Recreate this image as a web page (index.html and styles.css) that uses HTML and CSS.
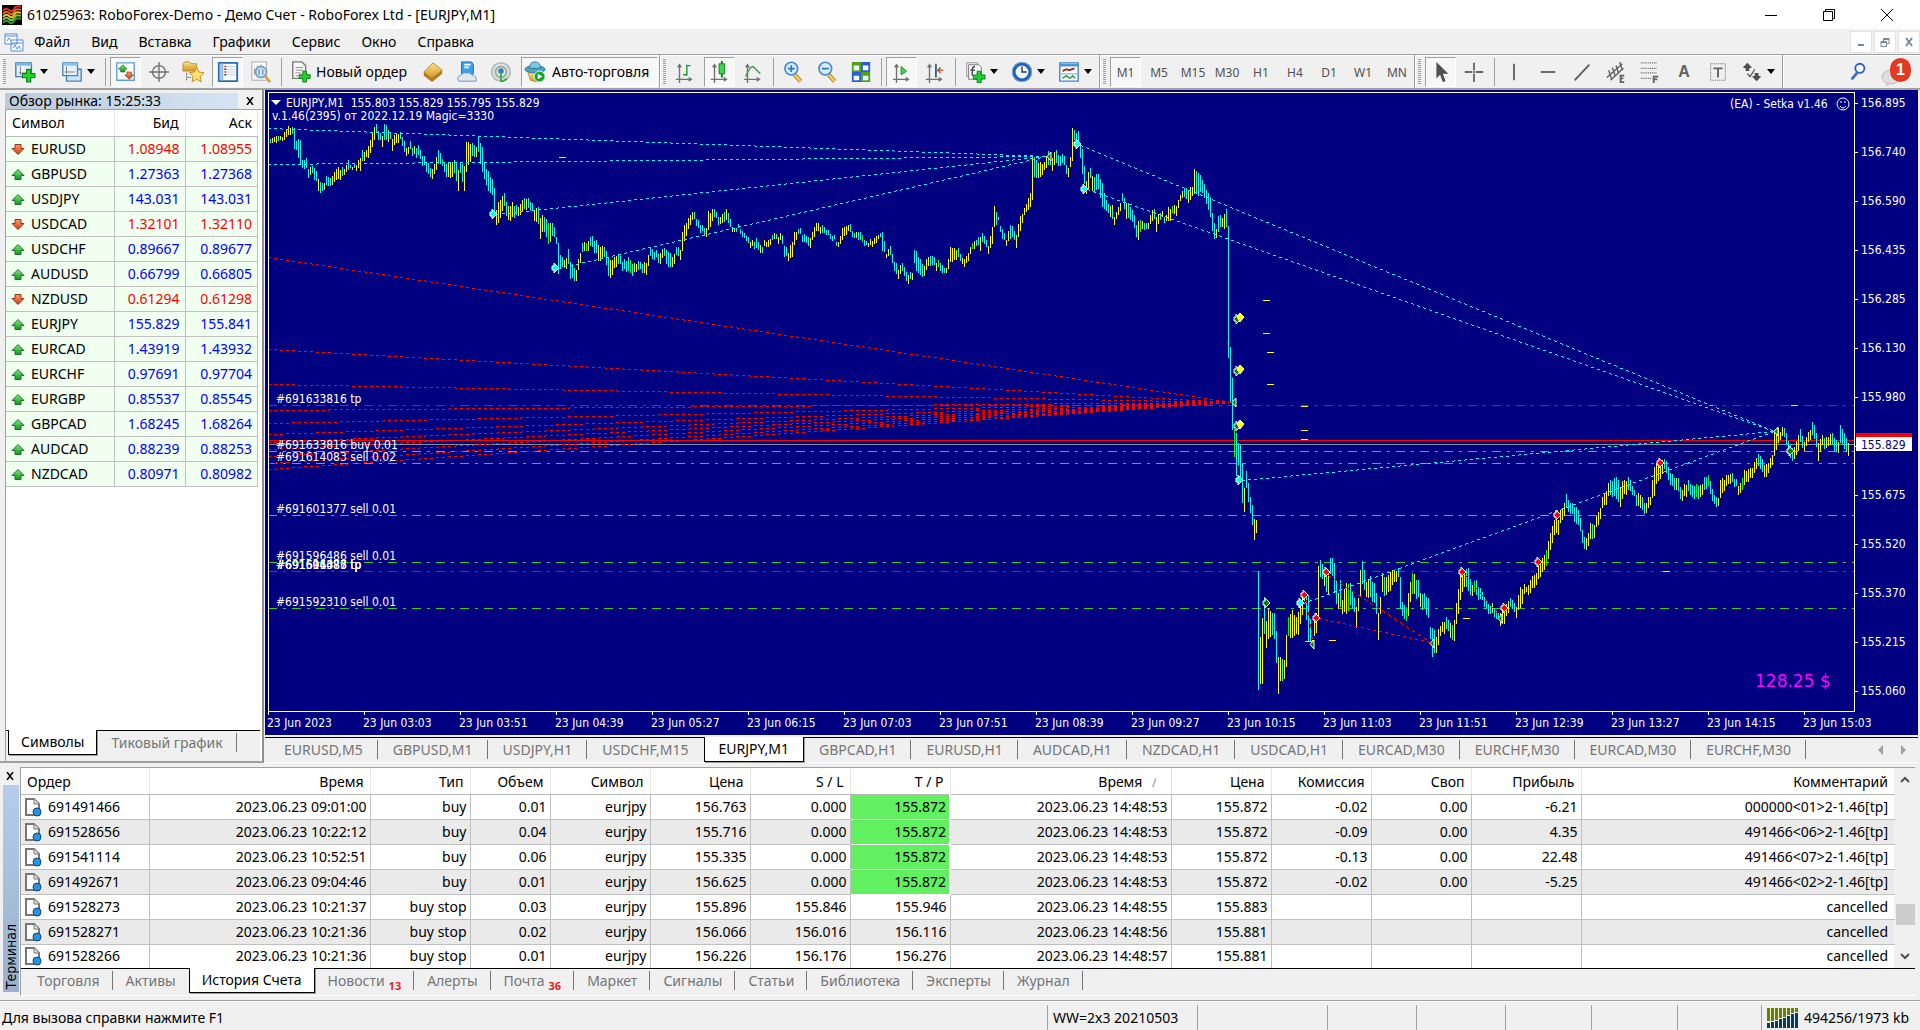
FILE: index.html
```html
<!DOCTYPE html>
<html lang="ru">
<head>
<meta charset="utf-8">
<title>61025963: RoboForex-Demo - Демо Счет - RoboForex Ltd - [EURJPY,M1]</title>
<link rel="stylesheet" href="styles.css">
</head>
<body>
<svg class="sprite" aria-hidden="true">
  <defs>
    <linearGradient id="gBlue" x2="0" y2="1"><stop offset="0" stop-color="#d8efff"/><stop offset="1" stop-color="#5b9fdc"/></linearGradient>
    <linearGradient id="gGold" x2="0" y2="1"><stop offset="0" stop-color="#fbe289"/><stop offset="1" stop-color="#d19622"/></linearGradient>
    <linearGradient id="gUp" x2="0" y2="1"><stop offset="0" stop-color="#7fe87f"/><stop offset="1" stop-color="#0a9a1a"/></linearGradient>
    <linearGradient id="gDown" x2="0" y2="1"><stop offset="0" stop-color="#ff9a6a"/><stop offset="1" stop-color="#d23a10"/></linearGradient>
  </defs>
  <symbol id="plus" viewBox="0 0 14 14"><path d="M5 1h4v4h4v4H9v4H5V9H1V5h4z" fill="#1fd32f" stroke="#0a7d14"/></symbol>
  <symbol id="axes" viewBox="0 0 20 22"><path d="M5 2v20M1 18h17M3 5l2-3 2 3M15 16l3 2-3 2" fill="none" stroke="#707070" stroke-width="1.500"/></symbol>
  <symbol id="up" viewBox="0 0 14 12"><path d="M7 1l6 6h-3v4H4V7H1z" fill="url(#gUp)" stroke="#256b2c"/></symbol>
  <symbol id="down" viewBox="0 0 14 12"><path d="M7 11l6-6h-3V1H4v4H1z" fill="url(#gDown)" stroke="#8c3418"/></symbol>
  <symbol id="doc" viewBox="0 0 20 20"><path d="M3 2h8l5 5v11H3z" fill="#fcfcfc" stroke="#777" stroke-width="2"/><path d="M11 2v5h5" fill="#ddd" stroke="#777"/><circle cx="14" cy="15" r="4" fill="#2196e8" stroke="#17466f" stroke-width="1"/></symbol>
  <symbol id="lens" viewBox="0 0 24 26"><path d="M14 16l7 8" stroke="#a67a1c" stroke-width="5"/><path d="M14 16l7 8" stroke="#f7cf58" stroke-width="3"/><circle cx="10" cy="9" r="7.500" fill="#d3ecfc" stroke="#4d8bc5" stroke-width="2"/></symbol>
  <symbol id="caret" viewBox="0 0 8 5"><path d="M0 0h8L4 5z" fill="#000"/></symbol>
  <symbol id="gold" viewBox="0 0 24 24"><path d="M2 12v4l9 7 11-9v-4z" fill="#b17c17"/><path d="M2 12L12 2l10 8-11 9z" fill="url(#gGold)" stroke="#b5852a"/></symbol>
</svg>

<header class="titlebar">
  <svg class="app-logo" viewBox="0 0 20 20"><path fill="#000" d="M0 0h20v20H0z"/><g fill="none" stroke-width="2"><path stroke="#d8301c" d="M1 6q3-4 6-1t5-1 7-2"/><path stroke="#e06030" d="M1 9q3-4 6-1t5-1 7-2"/><path stroke="#e2c22d" d="M1 12q3-4 6-1t5-1 7-2"/><path stroke="#82c234" d="M1 15q3-4 6-1t5-1 7-2"/><path stroke="#2d9a35" d="M1 18q3-4 6-1t5-1 7-2"/></g></svg>
  <h1>61025963: RoboForex-Demo - Демо Счет - RoboForex Ltd - [EURJPY,M1]</h1>
  <div class="window-buttons">
    <button aria-label="Свернуть"><svg viewBox="0 0 12 12"><path d="M0 6.500h12" stroke="#000"/></svg></button>
    <button aria-label="Восстановить"><svg viewBox="0 0 12 12" fill="none" stroke="#000"><path d="M.5 2.500h9v9h-9zM2.500 2.500v-2h9v9h-2"/></svg></button>
    <button aria-label="Закрыть"><svg viewBox="0 0 12 12"><path d="M0 0l12 12M12 0L0 12" stroke="#000"/></svg></button>
  </div>
</header>

<nav class="menubar">
  <svg class="menu-icon" viewBox="0 0 20 20" fill="#fff" stroke="#5590d8"><path d="M1 2h12v10H1zM1 4h12M7 8h12v11H7zM7 11h12M9 16l2-3 2 4 2-3 2 3M3 9l2-3 2 3"/></svg>
  <button>Файл</button><button>Вид</button><button>Вставка</button><button>Графики</button><button>Сервис</button><button>Окно</button><button>Справка</button>
  <div class="mdi-buttons">
    <button aria-label="Свернуть окно"><svg viewBox="0 0 10 10"><path d="M2 8h6" stroke="#778899" stroke-width="2"/></svg></button>
    <button aria-label="Восстановить окно"><svg viewBox="0 0 10 10" fill="none" stroke="#778899"><path d="M1 4.500h5.500v5H1zM1 5.500h5M3.500 4V1.500h5.500v5H7M3.500 2.500H9"/></svg></button>
    <button aria-label="Закрыть окно"><svg viewBox="0 0 10 10"><path d="M2 1l6 8M8 1L2 9" stroke="#778899" stroke-width="2"/></svg></button>
  </div>
</nav>

<div class="toolbar">
  <i class="grip"></i>
  <button class="tool drop" aria-label="Новый график"><svg class="ic" viewBox="0 0 24 24"><path d="M2 2h17v15H2z" fill="#e9f4ff" stroke="#3b7fb8" stroke-width="1.500"/><path d="M2 2h17v3H2z" fill="#7db4e2"/><path d="M5 13h10M7 6v9" stroke="#777"/><use href="#plus" x="8" y="8" width="16" height="16"/></svg><svg class="caret"><use href="#caret"/></svg></button>
  <button class="tool drop" aria-label="Профили"><svg class="ic" viewBox="0 0 24 24"><path d="M6 9h16v13H6z" fill="#cde4f8" stroke="#4a86bb" stroke-width="1.500"/><path d="M2 2h16v14H2z" fill="#e6f2fd" stroke="#4a86bb" stroke-width="1.500"/><path d="M2 2h16v3H2z" fill="#8cbbe4"/><path d="M4 12h11M6 6v8" stroke="#777"/></svg><svg class="caret"><use href="#caret"/></svg></button>
  <i class="sep"></i>
  <button class="tool on" aria-label="Обзор рынка"><svg class="ic" viewBox="0 0 24 24"><path d="M2 2h19v19H2z" fill="#fff" stroke="#5fa0d8" stroke-width="1.500"/><use href="#up" x="3" y="3" width="11" height="10"/><use href="#down" x="10" y="11" width="11" height="10"/></svg></button>
  <button class="tool" aria-label="Окно данных"><svg class="ic" viewBox="0 0 24 24" fill="none" stroke="#707070" stroke-width="1.500"><circle cx="12" cy="12" r="7"/><path d="M12 1v22M1 12h22"/></svg></button>
  <button class="tool" aria-label="Навигатор"><svg class="ic" viewBox="0 0 24 24"><path d="M1 3l2-2h5l2 2h6v8H1z" fill="url(#gGold)" stroke="#bb8a30"/><path d="M5 13v9M6 18h4" stroke="#555" stroke-dasharray="2 1"/><path d="M16 7l2.500 5 5.500.8-4 4 1 6-5-3-5 3 1-6-4-4 5.500-.8z" fill="#ffdf70" stroke="#c08a20"/></svg></button>
  <button class="tool on" aria-label="Терминал"><svg class="ic" viewBox="0 0 24 24"><path d="M2 2h20v20H2z" fill="#fff" stroke="#2a6bb0" stroke-width="2"/><path d="M3 3h4v18H3z" fill="#9cc6ee"/><path d="M10 6h10M10 9h10M10 12h10M10 15h10" stroke="#b4c8e8"/><path d="M8 6h2M8 12h2" stroke="#c33" stroke-width="1.500"/><path d="M8 9h2M8 15h2" stroke="#333" stroke-width="1.500"/></svg></button>
  <button class="tool" aria-label="Тестер стратегий"><svg class="ic" viewBox="0 0 24 24"><path d="M2 1h16v20H2z" fill="#f7f7f7" stroke="#aaa"/><path d="M5 15V8M8 16V5M12 9V4" stroke="#888"/><path d="M16 16l6 7" stroke="#d7a335" stroke-width="3"/><circle cx="12" cy="12" r="6" fill="#bfe0f6cc" stroke="#7ba2c0" stroke-width="2"/><path d="M10 15V9M14 15V9" stroke="#577"/></svg></button>
  <i class="sep"></i>
  <button class="tool text"><svg class="ic" viewBox="0 0 24 24"><path d="M3 1h10l4 4v14H3z" fill="#fafafa" stroke="#777" stroke-width="1.500"/><path d="M6 7h8M6 10h8M6 13h6M6 16h4" stroke="#888"/><use href="#plus" x="9" y="10" width="14" height="14"/></svg>Новый ордер</button>
  <button class="tool" aria-label="Редактор MetaEditor"><svg class="ic"><use href="#gold"/></svg></button>
  <button class="tool" aria-label="Облако"><svg class="ic" viewBox="0 0 24 24"><path d="M6 1h11l2 3v10H6z" fill="#3aa0ee" stroke="#1b6db5"/><path d="M9 4h7M9 7h5" stroke="#fff" stroke-width="2"/><path d="M3 22q-3-5 2-6 2-4 7-3 4-1 5 2 6 1 5 7z" fill="#e0e9f2" stroke="#6f8fae"/></svg></button>
  <button class="tool" aria-label="Сигналы"><svg class="ic" viewBox="0 0 24 24" fill="none"><circle cx="12" cy="12" r="10" fill="#dfe4e1" stroke="#b4beb9" stroke-width="2"/><circle cx="12" cy="12" r="6" stroke="#98aea1" stroke-width="2"/><circle cx="12" cy="11" r="3" fill="#3577c8"/><path d="M12 12v10q4 0 6-3" stroke="#39a94b" stroke-width="2"/></svg></button>
  <button class="tool text auto on"><svg class="ic" viewBox="0 0 24 24"><path d="M4 11l3 10 8 2 5-12z" fill="url(#gGold)" stroke="#b98a25"/><ellipse cx="12" cy="9" rx="11" ry="4" fill="#4ba3c6" stroke="#2a7898"/><path d="M6 8q0-7 6-7t6 7z" fill="#7cc6df" stroke="#2a7898"/><circle cx="17" cy="17" r="6" fill="#12a72a" stroke="#fff"/><path d="M15 14v6l5-3z" fill="#fff"/></svg>Авто-торговля</button>
  <i class="bar"></i><i class="grip"></i>
  <button class="tool" aria-label="Бары"><svg class="ic" viewBox="0 0 24 24"><use href="#axes" x="1" y="2" width="20" height="22"/><path d="M14 4v12M14 5h4M10 15h4" stroke="#159a25" stroke-width="1.500"/></svg></button>
  <button class="tool on" aria-label="Свечи"><svg class="ic" viewBox="0 0 24 24"><use href="#axes" x="1" y="2" width="20" height="22"/><path d="M14 0v18" stroke="#0c7d18" stroke-width="2"/><path d="M11 3h6v11h-6z" fill="#35dc45" stroke="#0c7d18"/></svg></button>
  <button class="tool" aria-label="Линия"><svg class="ic" viewBox="0 0 24 24"><use href="#axes" x="1" y="2" width="20" height="22"/><path d="M4 17q6-15 10-9l6 6" fill="none" stroke="#3f9a4a" stroke-width="1.500"/></svg></button>
  <i class="sep"></i>
  <button class="tool" aria-label="Увеличить"><svg class="ic" viewBox="0 0 24 26"><use href="#lens" width="24" height="26"/><path d="M6 9h8M10 5v8" stroke="#2c74b8" stroke-width="2"/></svg></button>
  <button class="tool" aria-label="Уменьшить"><svg class="ic" viewBox="0 0 24 26"><use href="#lens" width="24" height="26"/><path d="M6 9h8" stroke="#2c74b8" stroke-width="2"/></svg></button>
  <button class="tool" aria-label="Окна мозаикой"><svg class="ic" viewBox="0 0 24 24"><path d="M2 1h10v11H2zM12 12h10v11H12z" fill="#4fa319"/><path d="M12 1h10v11H12zM2 12h10v11H2z" fill="#2a5fd0"/><path d="M4 5h6v5H4zM14 5h6v5h-6zM4 16h6v5H4zM14 16h6v5h-6z" fill="#f4f8ff"/></svg></button>
  <i class="sep"></i>
  <button class="tool on" aria-label="Автопрокрутка"><svg class="ic" viewBox="0 0 24 24"><use href="#axes" x="1" y="2" width="20" height="22"/><path d="M11 6v9l6-4z" fill="#3edc4e" stroke="#128a20"/></svg></button>
  <button class="tool" aria-label="Сдвиг графика"><svg class="ic" viewBox="0 0 24 24"><use href="#axes" x="1" y="2" width="20" height="22"/><path d="M13 3v15" stroke="#2a6490" stroke-width="2"/><path d="M21 10h-6M18 7l-3 3 3 3" fill="none" stroke="#c8421c" stroke-width="1.500"/></svg></button>
  <i class="sep"></i>
  <button class="tool drop" aria-label="Индикаторы"><svg class="ic" viewBox="0 0 24 24"><path d="M3 2h12v15H3z" fill="#fff" stroke="#888"/><path d="M5 4h11l3 3v13H5z" fill="#fafafa" stroke="#777"/><path d="M12 6q-3 0-3 4v6M7 10h5" fill="none" stroke="#444" stroke-width="1.500"/><use href="#plus" x="9" y="10" width="15" height="15"/></svg><svg class="caret"><use href="#caret"/></svg></button>
  <button class="tool drop" aria-label="Периоды"><svg class="ic" viewBox="0 0 24 24"><circle cx="12" cy="12" r="9" fill="#eef6fd" stroke="#2360b0" stroke-width="4"/><circle cx="12" cy="12" r="10.500" fill="none" stroke="#73b0ea"/><path d="M12 6v6h5" fill="none" stroke="#333" stroke-width="1.500"/></svg><svg class="caret"><use href="#caret"/></svg></button>
  <button class="tool drop" aria-label="Шаблоны"><svg class="ic" viewBox="0 0 24 24"><path d="M2 2h20v20H2z" fill="#fff" stroke="#3f86c8" stroke-width="1.500"/><path d="M2 3h20v3H2z" fill="#4f96d8"/><path d="M5 11l4-2 3 1 6-2" fill="none" stroke="#9a2c14" stroke-width="2"/><path d="M3 14h18" stroke="#6ba3d6"/><path d="M5 19l4-3 4 3 3-3 3 3" fill="none" stroke="#2a9a38" stroke-width="1.500"/></svg><svg class="caret"><use href="#caret"/></svg></button>
  <i class="bar"></i><i class="grip"></i>
  <button class="tool tf on">M1</button><button class="tool tf">M5</button><button class="tool tf">M15</button><button class="tool tf">M30</button><button class="tool tf">H1</button><button class="tool tf">H4</button><button class="tool tf">D1</button><button class="tool tf">W1</button><button class="tool tf">MN</button>
  <i class="bar"></i><i class="grip"></i>
  <button class="tool on" aria-label="Курсор"><svg class="ic" viewBox="0 0 24 24"><path d="M7 1v18l4-4 3 8 3-1-3-8h6z" fill="#505050"/></svg></button>
  <button class="tool" aria-label="Перекрестие"><svg class="ic" viewBox="0 0 24 24"><path d="M12 2v8M12 14v9M2 12h8M14 12h8M12 11v2" stroke="#666" stroke-width="2"/></svg></button>
  <i class="sep"></i>
  <button class="tool" aria-label="Вертикальная линия"><svg class="ic" viewBox="0 0 24 24"><path d="M12 3v18" stroke="#606060" stroke-width="2"/></svg></button>
  <button class="tool" aria-label="Горизонтальная линия"><svg class="ic" viewBox="0 0 24 24"><path d="M4 12h16" stroke="#606060" stroke-width="2"/></svg></button>
  <button class="tool" aria-label="Трендовая линия"><svg class="ic" viewBox="0 0 24 24"><path d="M4 21L20 4" stroke="#606060" stroke-width="2"/></svg></button>
  <button class="tool" aria-label="Канал"><svg class="ic" viewBox="0 0 24 24" fill="none" stroke="#606060"><path d="M2 18L19 3M6 21L20 8M4 10l3 9M8 7l3 9M12 5l3 9M16 1l3 9" stroke-width="1.500"/><path d="M21 16h-4v7h4M17 19h3" stroke-width="2"/></svg></button>
  <button class="tool" aria-label="Фибоначчи"><svg class="ic" viewBox="0 0 24 24" fill="none" stroke="#606060"><path d="M2 2h18M2 8h18M2 13h18M2 19h12" stroke-width="1.500" stroke-dasharray="1 1"/><path d="M16 24v-7h5M16 20h4" stroke-width="2"/></svg></button>
  <button class="tool letter">A</button>
  <button class="tool" aria-label="Текстовая метка"><svg class="ic" viewBox="0 0 24 24" fill="none" stroke="#606060"><path d="M4 3h16v18H4z" stroke-dasharray="1 1"/><path d="M7 8h10M12 8v10" stroke-width="2"/></svg></button>
  <button class="tool drop" aria-label="Стрелки"><svg class="ic" viewBox="0 0 24 24" fill="#505050"><path d="M7 2l5 5-3 1v3H5V8L2 7zM17 22l5-5-3-1v-3h-4v3l-3 1z"/><path d="M7 14l3 3 5-8" fill="none" stroke="#606060" stroke-width="1.500"/></svg><svg class="caret"><use href="#caret"/></svg></button>
  <i class="bar"></i>
  <div class="toolbar-end">
    <button class="tool" aria-label="Поиск"><svg class="ic" viewBox="0 0 24 24"><path d="M5 20l6-7" stroke="#3d6cc8" stroke-width="3"/><circle cx="14" cy="8" r="5" fill="#f5faff" stroke="#2f5fc0" stroke-width="2"/></svg></button>
    <button class="notify" aria-label="Уведомления"><svg viewBox="0 0 32 32"><ellipse cx="12" cy="21" rx="9" ry="7" fill="#dedede" stroke="#bbb"/><path d="M8 26l-2 5 8-4z" fill="#cfcfcf"/></svg><span>1</span></button>
  </div>
</div>

<main class="workspace">
  <section class="market">
    <div class="market-head"><h2>Обзор рынка: 15:25:33</h2><button aria-label="Закрыть обзор рынка"><svg viewBox="0 0 8 8"><path d="M1 0l6 8M7 0L1 8" stroke="#000" stroke-width="1.500"/></svg></button></div>
    <div class="market-body">
      <table class="quotes">
        <colgroup><col class="q-sym"><col class="q-bid"><col></colgroup>
        <thead><tr><th>Символ</th><th>Бид</th><th>Аск</th></tr></thead>
        <tbody>
          <tr class="dn"><td><svg><use href="#down"/></svg>EURUSD</td><td>1.08948</td><td>1.08955</td></tr>
          <tr><td><svg><use href="#up"/></svg>GBPUSD</td><td>1.27363</td><td>1.27368</td></tr>
          <tr><td><svg><use href="#up"/></svg>USDJPY</td><td>143.031</td><td>143.031</td></tr>
          <tr class="dn"><td><svg><use href="#down"/></svg>USDCAD</td><td>1.32101</td><td>1.32110</td></tr>
          <tr><td><svg><use href="#up"/></svg>USDCHF</td><td>0.89667</td><td>0.89677</td></tr>
          <tr><td><svg><use href="#up"/></svg>AUDUSD</td><td>0.66799</td><td>0.66805</td></tr>
          <tr class="dn"><td><svg><use href="#down"/></svg>NZDUSD</td><td>0.61294</td><td>0.61298</td></tr>
          <tr><td><svg><use href="#up"/></svg>EURJPY</td><td>155.829</td><td>155.841</td></tr>
          <tr><td><svg><use href="#up"/></svg>EURCAD</td><td>1.43919</td><td>1.43932</td></tr>
          <tr><td><svg><use href="#up"/></svg>EURCHF</td><td>0.97691</td><td>0.97704</td></tr>
          <tr><td><svg><use href="#up"/></svg>EURGBP</td><td>0.85537</td><td>0.85545</td></tr>
          <tr><td><svg><use href="#up"/></svg>GBPCAD</td><td>1.68245</td><td>1.68264</td></tr>
          <tr><td><svg><use href="#up"/></svg>AUDCAD</td><td>0.88239</td><td>0.88253</td></tr>
          <tr><td><svg><use href="#up"/></svg>NZDCAD</td><td>0.80971</td><td>0.80982</td></tr>
        </tbody>
      </table>
      <div class="tabs market-tabs"><button class="active">Символы</button><button>Тиковый график</button></div>
    </div>
  </section>

  <section class="chart">
    <svg id="chart" class="plot" viewBox="265 90 1653 645" role="img" aria-label="EURJPY,M1"></svg>
    <div class="tabs chart-tabs">
      <button>EURUSD,M5</button><button>GBPUSD,M1</button><button>USDJPY,H1</button><button class="before">USDCHF,M15</button><button class="active">EURJPY,M1</button><button>GBPCAD,H1</button><button>EURUSD,H1</button><button>AUDCAD,H1</button><button>NZDCAD,H1</button><button>USDCAD,H1</button><button>EURCAD,M30</button><button>EURCHF,M30</button><button>EURCAD,M30</button><button>EURCHF,M30</button>
      <div class="tab-scroll"><svg viewBox="0 0 5 10"><path d="M5 0v10L0 5z" fill="#a0a0a0"/></svg><svg viewBox="0 0 5 10"><path d="M0 0v10l5-5z" fill="#a0a0a0"/></svg></div>
    </div>
  </section>
</main>

<section class="terminal">
  <div class="terminal-side"><button aria-label="Закрыть терминал"><svg viewBox="0 0 8 8"><path d="M1 0l6 8M7 0L1 8" stroke="#000" stroke-width="1.500"/></svg></button><h2><span>Терминал</span></h2></div>
  <div class="terminal-main">
    <div class="history">
      <table class="orders">
        <colgroup><col class="w128"><col class="w221"><col class="w100"><col class="w80"><col class="w100"><col class="w100"><col class="w100"><col class="w100"><col class="w221"><col class="w100"><col class="w100"><col class="w100"><col class="w110"><col></colgroup>
        <thead><tr><th>Ордер</th><th>Время</th><th>Тип</th><th>Объем</th><th>Символ</th><th>Цена</th><th>S / L</th><th>T / P</th><th>Время <i class="sort">∕</i></th><th>Цена</th><th>Комиссия</th><th>Своп</th><th>Прибыль</th><th>Комментарий</th></tr></thead>
        <tbody>
          <tr><td><svg><use href="#doc"/></svg>691491466</td><td>2023.06.23 09:01:00</td><td>buy</td><td>0.01</td><td>eurjpy</td><td>156.763</td><td>0.000</td><td class="hit">155.872</td><td>2023.06.23 14:48:53</td><td>155.872</td><td>-0.02</td><td>0.00</td><td>-6.21</td><td>000000&lt;01&gt;2-1.46[tp]</td></tr>
          <tr><td><svg><use href="#doc"/></svg>691528656</td><td>2023.06.23 10:22:12</td><td>buy</td><td>0.04</td><td>eurjpy</td><td>155.716</td><td>0.000</td><td class="hit">155.872</td><td>2023.06.23 14:48:53</td><td>155.872</td><td>-0.09</td><td>0.00</td><td>4.35</td><td>491466&lt;06&gt;2-1.46[tp]</td></tr>
          <tr><td><svg><use href="#doc"/></svg>691541114</td><td>2023.06.23 10:52:51</td><td>buy</td><td>0.06</td><td>eurjpy</td><td>155.335</td><td>0.000</td><td class="hit">155.872</td><td>2023.06.23 14:48:53</td><td>155.872</td><td>-0.13</td><td>0.00</td><td>22.48</td><td>491466&lt;07&gt;2-1.46[tp]</td></tr>
          <tr><td><svg><use href="#doc"/></svg>691492671</td><td>2023.06.23 09:04:46</td><td>buy</td><td>0.01</td><td>eurjpy</td><td>156.625</td><td>0.000</td><td class="hit">155.872</td><td>2023.06.23 14:48:53</td><td>155.872</td><td>-0.02</td><td>0.00</td><td>-5.25</td><td>491466&lt;02&gt;2-1.46[tp]</td></tr>
          <tr><td><svg><use href="#doc"/></svg>691528273</td><td>2023.06.23 10:21:37</td><td>buy stop</td><td>0.03</td><td>eurjpy</td><td>155.896</td><td>155.846</td><td>155.946</td><td>2023.06.23 14:48:55</td><td>155.883</td><td></td><td></td><td></td><td>cancelled</td></tr>
          <tr><td><svg><use href="#doc"/></svg>691528271</td><td>2023.06.23 10:21:36</td><td>buy stop</td><td>0.02</td><td>eurjpy</td><td>156.066</td><td>156.016</td><td>156.116</td><td>2023.06.23 14:48:56</td><td>155.881</td><td></td><td></td><td></td><td>cancelled</td></tr>
          <tr><td><svg><use href="#doc"/></svg>691528266</td><td>2023.06.23 10:21:36</td><td>buy stop</td><td>0.01</td><td>eurjpy</td><td>156.226</td><td>156.176</td><td>156.276</td><td>2023.06.23 14:48:57</td><td>155.881</td><td></td><td></td><td></td><td>cancelled</td></tr>
        </tbody>
      </table>
      <div class="scroll">
        <svg viewBox="0 0 10 7"><path d="M1 6l4-4 4 4" fill="none" stroke="#505050" stroke-width="2"/></svg>
        <i class="thumb"></i>
        <svg viewBox="0 0 10 7"><path d="M1 1l4 4 4-4" fill="none" stroke="#505050" stroke-width="2"/></svg>
      </div>
    </div>
    <div class="tabs terminal-tabs"><button>Торговля</button><button class="before">Активы</button><button class="active">История Счета</button><button>Новости<sub>13</sub></button><button>Алерты</button><button>Почта<sub>36</sub></button><button>Маркет</button><button>Сигналы</button><button>Статьи</button><button>Библиотека</button><button>Эксперты</button><button>Журнал</button></div>
  </div>
</section>

<footer class="status">
  <span class="help">Для вызова справки нажмите F1</span>
  <span class="s150">WW=2x3 20210503</span><span class="s130"></span><span class="s89"></span><span class="s89"></span><span class="s86"></span><span class="s86"></span><span class="s84"></span>
  <span class="net"><svg viewBox="0 0 32 20"><g fill="#6b7f00"><path d="M0 0h3v13H0zM4 0h3v13H4zM8 0h3v12H8zM12 0h3v10h-3zM16 0h3v9h-3zM20 0h3v7h-3zM24 0h3v5h-3zM28 0h3v4h-3z"/></g><g fill="#0a3c5c"><path d="M0 15h3v5H0zM4 14h3v6H4zM8 13h3v7H8zM12 11h3v9h-3zM16 10h3v10h-3zM20 8h3v12h-3zM24 6h3v14h-3zM28 5h3v15h-3z"/></g></svg>494256/1973 kb</span>
</footer>
<script src="chart.js"></script>
</body>
</html>
```
FILE: styles.css
```css
* { box-sizing: border-box; }
body {
  margin: 0;
  min-height: 100vh;
  display: flex;
  flex-direction: column;
  background: #f0f0f0;
  color: #000;
  font: 14px/20px "Noto Sans", "Open Sans", sans-serif;
}
button { margin: 0; padding: 0; border: 0; background: none; color: inherit; font: inherit; white-space: nowrap; }
h1, h2 { margin: 0; font: inherit; }
svg { display: block; flex: none; }
.sprite { position: absolute; width: 0; height: 0; }

/* title and menu */
.titlebar { display: flex; align-items: center; height: 29px; padding: 0 4px 0 2px; background: #fff; }
.app-logo { width: 20px; height: 20px; margin-right: 5px; }
.window-buttons { display: flex; margin-left: auto; }
.window-buttons button { width: 58px; display: flex; justify-content: center; }
.window-buttons svg { width: 12px; height: 12px; }
.menubar { display: flex; align-items: center; height: 25px; padding-left: 4px; }
.menu-icon { width: 20px; height: 20px; }
.menubar > button { padding: 0 11px 0 10px; }
.mdi-buttons { display: flex; gap: 2px; margin-left: auto; }
.mdi-buttons button { width: 22px; height: 22px; display: flex; align-items: center; justify-content: center; background: #fff; border: 1px solid #e2e2e2; }
.mdi-buttons svg { width: 10px; height: 10px; }

/* toolbar */
.toolbar { display: flex; align-items: center; height: 36px; border-top: 1px solid #a0a0a0; border-bottom: 2px solid #a0a0a0; box-shadow: inset 0 1px #fff; padding-left: 1px; }
.tool { height: 30px; width: 34px; display: flex; align-items: center; justify-content: center; flex: none; }
.tool .ic { width: 22px; height: 22px; }
.tool.on { border: 1px solid #fff; border-top-color: #a0a0a0; border-left-color: #a0a0a0; background: #f7f7f7; width: 31px; margin: 0 1px 0 2px; }
.tool.drop { width: 47px; gap: 4px; justify-content: flex-end; padding-right: 7px; }
.tool .caret { width: 8px; height: 5px; }
.tool.text { width: 132px; gap: 4px; justify-content: flex-start; padding-left: 6px; }
.tool.auto { width: 137px; padding-left: 2px; gap: 6px; margin: 0 1px 0 3px; }
.tool.tf { color: #505050; font-size: 12px; line-height: 22px; padding-top: 2px; }
.tool.letter { color: #606060; font: bold 16px "Liberation Sans", sans-serif; }
.grip { width: 3px; height: 26px; flex: none; margin: 0 2px 0 2px; background: repeating-linear-gradient(#a0a0a0 0 1px, transparent 1px 2px); }
.bar { width: 2px; align-self: stretch; flex: none; border-left: 1px solid #a0a0a0; background: #fff; }
.sep { width: 1px; height: 28px; flex: none; margin: 0 2px 0 3px; background: #a0a0a0; }
.toolbar-end { display: flex; align-items: center; margin-left: auto; padding-right: 7px; }
.notify { position: relative; width: 34px; height: 32px; margin-left: 4px; }
.notify svg { width: 32px; height: 32px; }
.notify span { position: absolute; right: 2px; top: 2px; width: 21px; height: 24px; border-radius: 12px; background: #e03a20; color: #fff; font: bold 16px/24px "Liberation Sans", sans-serif; }

/* market watch */
.workspace { display: flex; }
.market { width: 264px; flex: none; display: flex; flex-direction: column; padding: 2px 0 0 5px; border-right: 2px solid #909090; border-bottom: 2px solid #a0a0a0; }
.market-head { display: flex; align-items: center; height: 17px; }
.market-head h2 { flex: 1; height: 16px; line-height: 15px; padding-left: 4px; background: linear-gradient(90deg, #bccbdc, #d6e3f2); }
.market-head button { width: 24px; display: flex; justify-content: center; }
.market-head svg, .terminal-side svg { width: 8px; height: 8px; }
.market-body { flex: 1; display: flex; flex-direction: column; border: 1px solid #a0a0a0; border-right: 0; border-bottom: 0; background: #fff; }
table { border-collapse: collapse; table-layout: fixed; width: 100%; }
.quotes { width: 252px; }
.q-sym { width: 108px; }
.q-bid { width: 71px; }
th { font-weight: normal; text-align: right; border-bottom: 1px solid #b8b8b8; border-right: 1px solid #e4e4e4; padding: 1px 6px 0 0; height: 26px; }
td { text-align: right; border-right: 1px solid #c0c0c0; border-bottom: 1px solid #c0c0c0; height: 25px; padding: 0 3px; white-space: nowrap; }
th:first-child, td:first-child { text-align: left; padding-left: 6px; }
.quotes td { background: #f0fff0; color: #0000ff; padding-right: 5px; }
.quotes td:first-child { color: #000; padding-left: 5px; }
.quotes td:last-child, .quotes th:last-child { padding-right: 5px; }
.quotes .dn td:not(:first-child) { color: #ff0000; }
.quotes svg { display: inline-block; vertical-align: -2px; width: 14px; height: 13px; margin-right: 6px; }

/* tab strips */
.tabs { display: flex; background: #f0f0f0; border-top: 1px solid #000; color: #757575; }
.tabs button { position: relative; height: 23px; line-height: 22px; padding: 0 13px; }
.tabs button:not(.active):not(.before)::after { content: ""; position: absolute; right: 0; top: 2px; bottom: 2px; width: 1px; background: #757575; }
.tabs .active { background: #fff; color: #000; border: 1px solid #000; border-top: 0; margin-top: -1px; height: 25px; line-height: 24px; padding: 0 12px; box-shadow: 1px 1px #a0a0a0; }
.market-tabs { margin-top: auto; height: 31px; padding-left: 2px; margin-right: 2px; }
.market-tabs button { padding: 0 14px; }

/* chart */
.chart { flex: 1; min-width: 0; padding: 0 2px 0 1px; display: flex; flex-direction: column; }
.plot { width: 100%; height: auto; background: #000080; }
.plot text { font: 12px "DejaVu Sans Condensed", "DejaVu Sans", sans-serif; fill: #fff; white-space: pre; }
.plot .profit { font: 17px "DejaVu Sans", sans-serif; fill: #ff00ff; }
.plot .price { fill: #000080; }
.chart-tabs { margin-top: 2px; height: 26px; padding-left: 4px; border-bottom: 1px solid #fff; }
.chart-tabs button { padding: 0 15px; }
.chart-tabs .active { padding: 0 14px; }
.tab-scroll { display: flex; gap: 18px; margin: 7px 12px 0 auto; }
.tab-scroll svg { width: 5px; height: 10px; }

/* terminal */
.terminal { display: flex; margin-top: 4px; padding-right: 5px; }
.terminal-side { width: 20px; flex: none; display: flex; flex-direction: column; padding: 0 1px 4px 3px; }
.terminal-side button { height: 18px; display: flex; align-items: center; justify-content: center; width: 14px; }
.terminal-side h2 { flex: 1; min-height: 0; display: flex; align-items: flex-end; background: linear-gradient(#b4cdea, #9ab0cc); font: 14px/16px "DejaVu Sans Condensed", "DejaVu Sans", sans-serif; }
.terminal-side span { writing-mode: vertical-rl; transform: rotate(180deg); padding-top: 3px; }
.terminal-main { flex: 1; min-width: 0; border-left: 1px solid #a0a0a0; border-top: 1px solid #a0a0a0; border-bottom: 1px solid #fff; }
.history { display: flex; background: #fff; }
.orders { flex: 1; }
.orders th { height: 26px; padding-top: 2px; }
.orders th:last-child, .orders td:last-child { padding-right: 6px; border-right-color: #f0f0f0; }
.orders tr:nth-child(even) td { background: #eaeaea; }
.orders tr:last-child td { border-bottom: 0; height: 24px; }
.orders tr .hit, .orders tr:nth-child(even) .hit { background: #60f060; border-right: 2px solid #fff; border-bottom: 1px solid #fff; }
.orders td:first-child { padding-left: 2px; }
.orders svg { display: inline-block; vertical-align: -5px; width: 20px; height: 20px; margin-right: 5px; }
.sort { margin: 0 8px 0 6px; font-size: 12px; line-height: 12px; color: #808080; font-style: normal; }
.w80 { width: 80px; } .w100 { width: 100px; } .w110 { width: 110px; } .w128 { width: 128px; } .w221 { width: 221px; }
.scroll { width: 20px; flex: none; display: flex; flex-direction: column; align-items: center; background: #f0f0f0; padding: 8px 0; }
.scroll svg { width: 10px; height: 7px; }
.thumb { width: 19px; height: 21px; margin: auto 0 28px; background: #cdcdcd; }
.terminal-tabs { height: 27px; padding-left: 3px; }
.terminal-tabs .active { padding: 0 12px; }
sub { color: #ee1c25; font: bold 11px/12px "Noto Sans", sans-serif; margin-left: 4px; vertical-align: -4px; }

/* status bar */
.status { margin-top: 4px; flex: 1; min-height: 29px; display: flex; align-items: stretch; border-top: 1px solid #a0a0a0; box-shadow: inset 0 1px #fff; padding-top: 4px; line-height: 26px; }
.status span { flex: none; border-left: 1px solid #a0a0a0; padding-left: 5px; }
.status .help { flex: 1; border: 0; padding-left: 2px; }
.s150 { width: 150px; } .s130 { width: 130px; } .s89 { width: 89px; } .s86 { width: 86px; } .s84 { width: 84px; }
.status .net { width: 159px; display: flex; align-items: center; gap: 5px; }
.net svg { width: 32px; height: 20px; }
```
FILE: chart.js
```js
// Bars as "x high low" knots; highs and lows are thirds of a pixel below the section's base.
const sections = [
  { base: 110, knots: `268 92 105,274 80 97,281 80 95,288 48 75,292 52 70,294 55 120,296 92 125,299 90 165,302 150 175,305 145 175,308 178 200,312 168 190,314 175 205,318 208 240,323 218 240,326 198 222,331 198 222,338 172 205,343 178 195,348 150 180,350 165 172,356 165 180,360 145 180,362 120 155,366 120 145,372 65 110,376 42 70,379 68 95,382 78 112,384 42 88,389 65 90,392 88 125,396 70 100,400 65 85,404 92 125,406 115 135,409 92 118,412 115 135,418 105 135,422 138 165,428 160 190,432 178 208,438 120 160,442 148 165,448 158 205,454 150 190,458 180 245,460 158 185,464 168 245,466 95 190,468 97 165,472 100 135,476 110 140,478 78 125,482 110 185,484 160 205,488 182 240,492 208 255,494 235 315,496 300 345,498 275 335,504 250 290,508 288 330,512 275 318,518 290 320,524 265 300,530 275 300,534 300 330,538 290 345,540 325 388,544 322 365,548 338 405,552 340 378,556 382 402,558 400 490,560 435 475,564 450 475,568 418 465,570 455 505,576 480 512,580 430 460,582 400 430,586 400 425,590 380 408,596 390 425,598 405 455,604 410 440,608 440 498,610 450 500,614 440 475,618 435 465,622 455 485,628 440 480,634 460 487,640 455 480,646 460 493,650 410 442,656 420 440,660 430 460,664 415 440,668 425 475,672 440 470,676 412 435,680 420 450,682 365 420,686 340 380,690 315 345,694 305 325,698 330 355,702 345 365,706 355 380,708 303 360,714 298 320,720 322 342,724 305 335,728 308 340,732 352 367,738 342 355,744 368 385,750 395 412,756 385 412,760 405 425,766 395 412,772 375 390,778 380 400,782 375 402,784 408 440,788 430 455,792 395 438,794 365 405,798 358 372,804 372 395,810 385 410,814 350 380,816 340 360` },
  { base: 120, knots: `816 310 332,821 315 340,827 330 342,832 348 362,837 365 382,842 325 362,845 318 340,849 312 335,853 340 355,860 335 360,864 360 375,867 368 385,874 355 375,880 340 352,882 337 393,886 402 418,890 378 405,892 402 430,898 450 482,902 430 455,906 455 482,911 460 480,914 390 430,916 393 450,923 438 470,927 410 435,932 408 435,936 428 450,938 420 440,941 435 458,946 445 458,950 380 425,957 383 412,961 415 433,966 408 432,972 368 390,976 360 380,979 352 392,982 338 362,988 378 402,992 322 375,994 258 322,997 290 305,1001 328 355,1005 360 378,1009 315 355,1014 332 362,1016 345 383,1019 288 330,1023 265 285,1030 220 262,1032 105 238,1034 110 170,1038 130 175,1043 125 155,1047 92 132,1051 115 152,1055 90 125,1059 108 140,1063 108 138,1067 145 170,1070 110 140,1072 25 122,1074 30 65,1078 33 75,1080 75 112,1082 88 160,1084 138 188,1086 182 222,1088 155 205,1090 145 172,1092 168 215,1098 162 208,1102 190 258,1106 240 270,1109 258 288,1112 255 290` },
  { base: 110, knots: `1112 300 325,1114 320 342,1118 290 315,1122 250 278,1126 278 325,1130 290 330,1134 315 355,1136 345 378,1138 333 387,1142 333 352,1148 338 360,1152 300 335,1154 297 322,1156 320 365,1160 310 330,1166 315 332,1168 290 335,1172 288 305,1176 288 318,1180 255 275,1184 238 258,1188 242 282,1192 230 262,1194 178 250,1198 190 255,1202 210 250,1206 240 282,1210 262 325,1214 340 383,1216 358 386,1218 318 365,1222 325 352,1226 297 350,1228 348 747,1230 711 872,1232 804 957,1234 958 1043` },
  { base: 380, knots: `1236 160 285,1238 190 258,1240 195 300,1242 250 365,1244 325 395,1246 272 328,1250 350 400,1254 418 482,1256 420 460` },
  { base: 380, knots: `1258 573 930,1260 770 915,1262 715 915,1264 650 765,1266 722 803,1268 685 780,1272 700 765,1274 698 780,1276 752 848,1278 830 940,1280 832 905,1284 840 900,1286 765 865,1288 710 765,1292 690 775,1296 712 760,1298 695 765,1302 650 705,1304 640 660,1307 645 785,1310 718 790,1312 780 805,1314 720 765,1316 698 755,1318 558 715,1320 540 590,1323 575 620,1327 575 645,1330 535 585,1332 534 585,1334 548 640,1337 640 685,1340 600 680,1342 660 705,1346 608 700,1349 610 670,1353 655 695,1356 680 742,1358 655 695,1360 570 650,1362 543 610,1366 605 655,1370 588 650,1373 610 670,1376 640 705,1378 700 780,1380 650 700,1382 580 635,1386 590 645,1389 575 630,1393 570 605,1397 565 590,1400 590 690,1402 665 705,1406 680 725,1408 640 705,1412 578 640,1417 600 650,1419 640 685,1424 638 688,1428 655 712,1430 740 775,1432 745 830,1436 770 822,1439 738 770,1445 710 745,1450 730 770,1454 720 780,1456 668 735,1460 585 665,1464 580 620,1468 563 630,1472 615 645,1475 600 640,1481 635 665,1486 660 690,1493 685 710,1498 700 720,1500 700 740,1503 690 730,1509 655 685,1515 680 710,1520 620 680,1526 620 640,1530 600 640,1536 580 615,1539 550 595,1545 510 555,1549 460 515,1554 420 465,1558 420 465,1560 390 430,1563 368 405,1566 342 380,1570 370 400,1575 380 430,1579 415 450,1583 470 505,1586 475 508,1589 430 480,1594 435 470,1598 395 430,1604 340 375,1609 300 345,1613 295 350,1616 290 355,1620 320 380,1624 300 345,1628 292 330,1633 330 350,1636 345 380,1641 350 390,1645 370 400,1649 350 380,1654 260 350,1658 255 300,1661 240 285,1664 238 270,1667 260 300,1670 280 315,1677 295 330,1681 330 365,1688 300 335,1692 315 355,1699 315 350,1704 290 325,1708 285 320,1713 345 375,1717 355 380,1720 300 350,1727 285 310,1732 280 305,1737 318 340,1743 270 310,1751 265 295,1756 235 270,1758 222 260,1764 255 295,1769 235 265,1772 225 255,1774 150 230,1779 155 180,1783 145 170,1785 160 195,1790 195 235,1794 200 240,1798 165 210,1800 148 185,1804 185 215,1809 150 180,1812 126 165,1815 160 200,1818 190 240,1822 165 200,1827 170 200,1831 160 195,1834 175 215,1838 185 220,1840 135 185,1844 160 205,1848 190 228` }
];

const noise = n => { const s = Math.sin(n * 12.9898) * 43758.5453; return s - Math.floor(s) - 0.5; };
const paths = { up: '', down: '', flat: '' };
for (const { base, knots } of sections) {
  const pts = knots.split(',').map(k => k.trim().split(' ').map(Number)).map(([x, h, l]) => [2 * Math.round(x / 2), h, l]);
  for (let i = 0; i < pts.length; i++) {
    const [x0, h0, l0] = pts[i];
    const [x1, h1, l1] = pts[i + 1] || [x0 + 2, h0, l0 + 2];
    for (let x = x0; x < x1; x += 2) {
      const t = (x - x0) / (x1 - x0);
      const wob = x === x0 ? 0 : noise(x) * 18;
      const high = base + (h0 + (h1 - h0) * t + wob) / 3;
      const low = base + (l0 + (l1 - l0) * t + wob + noise(x + 1) * 8) / 3;
      const slope = (h1 + l1 - h0 - l0) / (x1 - x0) + noise(x + 7) * 14;
      const kind = noise(x + 3) > 0.485 ? 'flat' : slope < 0 ? 'up' : 'down';
      paths[kind] += `M${x + 0.5} ${Math.round(high)}V${Math.max(Math.round(low), Math.round(high) + 3)}`;
    }
  }
}

let out = '<g shape-rendering="crispEdges" fill="none" stroke-width="1">';
const line = (x1, y1, x2, y2, color, dash = '') =>
  `<path d="M${x1} ${y1}L${x2} ${y2}" stroke="${color}"${dash && ` stroke-dasharray="${dash}"`}/>`;

// Sloped dotted line, stepped pixel by pixel: three on, three off along its longer axis.
const dotted = (x1, y1, x2, y2, color) => {
  const n = Math.max(Math.abs(x2 - x1), Math.abs(y2 - y1));
  let d = '';
  for (let i = 0; i < n; i++) {
    if (i % 6 > 2) continue;
    const x = Math.round(x1 + (x2 - x1) * i / n);
    const y = Math.round(y1 + (y2 - y1) * i / n);
    d += `M${x} ${y + 0.5}h1`;
  }
  return `<path d="${d}" stroke="${color}"/>`;
};

const DASHDOT = '9 6 3 6';
for (const y of [451, 463, 515, 562, 608]) out += line(268, y + 0.5, 1854, y + 0.5, '#32cd32', DASHDOT);
for (const y of [405, 571]) out += line(268, y + 0.5, 1854, y + 0.5, '#ff0000', DASHDOT);
out += line(268, 440.5, 1854, 440.5, '#ff0000') + line(268, 444.5, 1854, 444.5, '#8090a0');
out += `<path d="${paths.up}" stroke="#ffff00"/><path d="${paths.down}" stroke="#00ffff"/><path d="${paths.flat}" stroke="#00ff00"/>`;
for (const [x1, y1, x2, y2] of [
  [268, 128, 1046, 156], [268, 164, 1046, 156], [496, 214, 1046, 156], [558, 268, 1046, 156],
  [1080, 145, 1774, 431], [1087, 189, 1774, 431], [1242, 480, 1774, 431], [1303, 603, 1774, 431]
]) out += dotted(x1, y1, x2, y2, '#00ffff');
for (const y of [257, 349, 384, 410, 423, 434, 442, 449, 456, 463, 469]) out += dotted(268, y, 1232, 402, '#ff0000');
for (const [x1, y1, x2, y2] of [[1306, 600, 1312, 640], [1319, 618, 1430, 642], [1328, 575, 1430, 642], [1465, 575, 1500, 617]])
  out += dotted(x1, y1, x2, y2, '#ff0000');
for (const [x, y] of [[559, 157], [1263, 300], [1263, 333], [1267, 352], [1267, 384], [1301, 406], [1301, 430], [1301, 439], [1463, 618], [1329, 640], [1305, 641], [1663, 571], [1791, 405]])
  out += line(x, y + 0.5, x + 7, y + 0.5, '#ffff00');
out += '<path d="M268.5 711V92.5H1854.5V711.5H268" stroke="#fff"/>';
out += '</g>';

// trade marks
const arrow = (x, y, c) => `<path d="M${x - 3} ${y - 2}h2v-3l5 5-5 5v-3h-2z" fill="${c}" stroke="#fff"/>`;
for (const [x, y] of [[493, 214], [555, 268], [1077, 144], [1084, 189], [1239, 480], [1300, 603]]) out += arrow(x, y, '#00ffff');
for (const [x, y] of [[1304, 595], [1316, 618], [1326, 572], [1462, 572], [1504, 608], [1538, 562], [1557, 515], [1660, 463]]) out += arrow(x, y, '#ff0000');
for (const [x, y] of [[1266, 603], [1790, 451]]) out += arrow(x, y, '#008000');
for (const [x, y] of [[1049, 156], [1234, 402], [1776, 431], [1312, 644], [1432, 643], [1500, 618]])
  out += `<path d="M${x + 2} ${y - 4}v9l-4-4.500z" fill="#008000" stroke="#fff"/>`;
for (const [x, y] of [[1239, 318], [1239, 370], [1239, 425]])
  out += arrow(x - 2, y + 1, '#008000') + `<path d="M${x - 2} ${y - 1}l3-4 4 4-4 5z" fill="#ffff00" stroke="#fff"/>`;

const text = (x, y, s, cls = '') => `<text x="${x}" y="${y}"${cls && ` class="${cls}"`}>${s}</text>`;
['156.895', '156.740', '156.590', '156.435', '156.285', '156.130', '155.980', '', '155.675', '155.520', '155.370', '155.215', '155.060'].forEach((p, i) => {
  const y = 103 + i * 49;
  out += `<path d="M1855 ${y + 0.5}h3" stroke="#fff"/>` + (p && text(1861, y + 4, p));
});
['2023', '03:03', '03:51', '04:39', '05:27', '06:15', '07:03', '07:51', '08:39', '09:27', '10:15', '11:03', '11:51', '12:39', '13:27', '14:15', '15:03'].forEach((t, i) => {
  const x = 268 + i * 96;
  out += `<path d="M${x + 0.5} 712v3" stroke="#fff"/>` + text(x - 1, 727, '23 Jun ' + t);
});
out += '<path d="M1856 433h56v5h-56z" fill="#ff0000"/><path d="M1856 437h56v14h-56z" fill="#fff"/>' + text(1861, 449, '155.829', 'price');
out += '<path d="M271 100h10l-5 5z" fill="#fff"/>';
out += text(286, 107, 'EURJPY,M1  155.803 155.829 155.795 155.829') + text(272, 120, 'v.1.46(2395) от 2022.12.19 Magic=3330');
out += text(1730, 108, '(EA) - Setka v1.46');
out += '<g fill="none" stroke="#fff"><circle cx="1843" cy="104" r="6"/><path d="M1840 106q3 4 6 0M1841 101v2M1845 101v2"/></g>';
for (const [y, s] of [[403, '#691633816 tp'], [449, '#691633816 buy 0.01'], [461, '#691614083 sell 0.02'], [513, '#691601377 sell 0.01'], [560, '#691596486 sell 0.01'], [569, '#691596486 tp'], [569, '#691601377 tp'], [569, '#691614083 tp'], [606, '#691592310 sell 0.01']])
  out += text(276, y, s);
out += text(1755, 687, '128.25 $', 'profit');
document.getElementById('chart').innerHTML = out;
```
